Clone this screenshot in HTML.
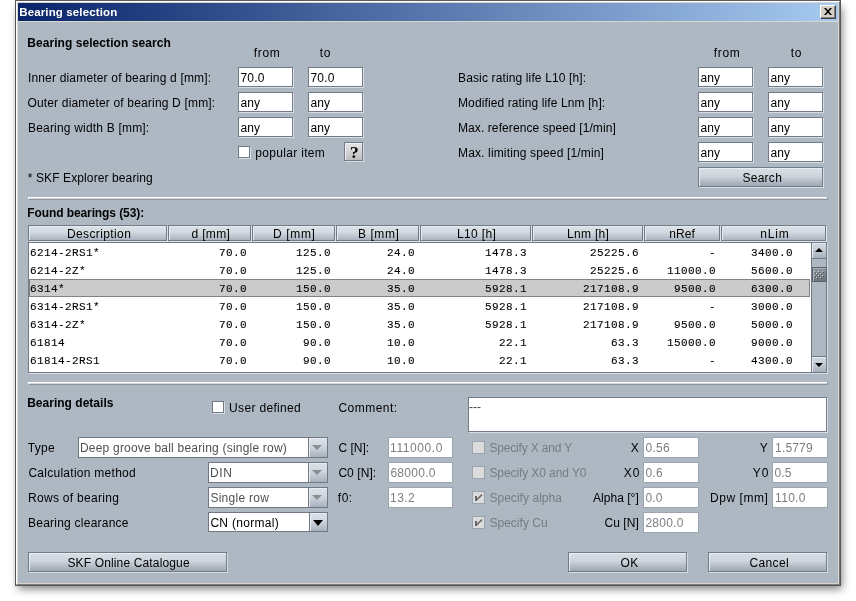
<!DOCTYPE html>
<html><head><meta charset="utf-8"><title>Bearing selection</title>
<style>
*{box-sizing:border-box;margin:0;padding:0}
html,body{width:856px;height:601px;overflow:hidden;background:#fff}
body{font-family:"Liberation Sans",sans-serif;font-size:12px;color:#000;position:relative}
.a{position:absolute;white-space:nowrap}
#root{position:absolute;left:0;top:0;width:856px;height:601px;will-change:transform}
i,b{font-style:normal}
#shadow{left:18px;top:7px;width:824px;height:582px;background:rgba(0,0,0,.5);filter:blur(4.5px);border-radius:2px}
#win{left:15px;top:0;width:826px;height:586px;background:#aeb8c3;border:1px solid;border-color:#5c5c5c #54585c #54585c #50545a}
#win2{left:16px;top:1px;width:824px;height:584px;border:1px solid;border-color:#fff #737477 #7c7c7e #fff}
#win3{left:17px;top:2px;width:822px;height:582px;border:1px solid #dad6ce}
#title{left:18px;top:3px;width:820px;height:18px;background:linear-gradient(90deg,#0a246a 0%,#a6caf0 100%)}
#titlel{left:18px;top:21px;width:820px;height:1px;background:#dad6ce}
#ttext{top:5px;font-weight:bold;font-size:11.5px;color:#fff;line-height:14px;height:14px}
#close{left:820px;top:5px;width:16px;height:14px;background:#d4d0c8;border:1px solid;border-color:#fff #404040 #404040 #fff;box-shadow:inset -1px -1px 0 #808080}
.l{line-height:14px;height:14px}
.b{font-weight:bold}
.in{background:#fff;border:1px solid #717c88;box-shadow:1px 1px 0 #d6dde4;height:20px}
.dis{color:#4e5154;-webkit-text-stroke:0 !important}
.dis2{color:#7b7e82;-webkit-text-stroke:0 !important}
.dis3{color:#767c83;-webkit-text-stroke:0 !important}
.ind{background:#fff;border:1px solid #9aa5b0;height:21px}
.btn{border:1px solid #717c88;box-shadow:1px 1px 0 #d6dde4, inset 1px 1px 0 #e9edf2;background:linear-gradient(#d9dfe6,#cdd4dc 45%,#9da6b2);text-align:center}
.sep i{position:absolute;left:0;top:0;right:1px;height:2px;background:linear-gradient(#fff 50%,#d4d8dd 50%);border-left:1px solid #fff}
.sep b{position:absolute;left:1px;top:0;right:0;height:3px;border-bottom:1px solid #8d949b;border-right:1px solid #8d949b}
.cb{border:1px solid #717b86;background:#fff;box-shadow:1px 1px 0 #d9dfe6}
.cbd{border:1px solid #97a3ae;background:#dcdcdc}
.tbl{background:#fff;border:1px solid #717c88;box-shadow:1px 1px 0 #d6dde4}
.th{border:1px solid #717c88;box-shadow:1px 1px 0 #dfe5eb, inset 1px 1px 0 #e6ebf0;background:linear-gradient(#dde2e9,#d3d9e0 45%,#a9b3bf)}
.sel{background:#cbcbcb;border:1px solid #828282}
.mono{-webkit-text-stroke:0.1px #000;font-family:"Liberation Mono",monospace;font-size:11px;letter-spacing:0.4px;line-height:14px;height:14px}
.sbt{background:#aeb8c3;border-left:1px solid #6f7a86;border-right:1px solid #717c88}
.sbb{border:1px solid #717c88;border-left:none;background:linear-gradient(#d4dae1,#c6cdd6 45%,#a6afbb);box-shadow:inset 1px 1px 0 #e6eaef}
.thumb{border:1px solid #59626c;background:linear-gradient(#8e959d,#6b737b);box-shadow:inset 1px 1px 0 #a7adb4}
.combo{border:1px solid #6f7985;background:#fff}
.cbtn{position:absolute;right:0;top:0;width:19px;height:19px;border-left:1px solid #6f7985;background:linear-gradient(#dde2e9,#cfd6de 45%,#a7b0bc);box-shadow:inset 1px 1px 0 #e9edf2}
.cbtn.en{width:18px;height:18px}
.tri{position:absolute;width:0;height:0;border-left:5px solid transparent;border-right:5px solid transparent;border-top:6px solid #000}
.btn.q{background:linear-gradient(#e4e4e4,#d6d6d6 45%,#bdbdbd);box-shadow:1px 1px 0 #d6dde4, inset 1px 1px 0 #f2f2f2}
.qm{font-family:"Liberation Serif",serif;font-weight:bold;font-size:17.5px;line-height:19px;height:19px}
</style></head>
<body><div id="root">
<div class="a" id="shadow"></div><div class="a" id="win"></div><div class="a" id="win2"></div><div class="a" id="win3"></div>
<div class="a" id="title"></div><div class="a" id="titlel"></div>
<div class="a" id="close"><svg width="14" height="12" viewBox="0 0 14 12" style="position:absolute;left:0;top:0"><path d="M3 2h2l6 7h-2z M9 2h2l-6 7h-2z" fill="#000"/></svg></div>
<div class="a" id="ttext" style="left:19.2px;letter-spacing:0.138px">Bearing selection</div>
<div class="a l b" style="left:27.2px;top:36px;letter-spacing:0.065px;">Bearing selection search</div>
<div class="a l " style="left:253.8px;top:46px;letter-spacing:0.667px;">from</div>
<div class="a l " style="left:319.8px;top:46px;letter-spacing:0.7px;">to</div>
<div class="a l " style="left:713.8px;top:46px;letter-spacing:0.667px;">from</div>
<div class="a l " style="left:790.8px;top:46px;letter-spacing:0.7px;">to</div>
<div class="a l " style="left:27.9px;top:71px;letter-spacing:0.181px;">Inner diameter of bearing d [mm]:</div>
<div class="a in" style="left:238px;top:67px;width:55px;"></div>
<div class="a l " style="left:240.4px;top:71px;letter-spacing:0.233px;">70.0</div>
<div class="a in" style="left:308px;top:67px;width:55px;"></div>
<div class="a l " style="left:310.4px;top:71px;letter-spacing:0.233px;">70.0</div>
<div class="a l " style="left:27.4px;top:96px;letter-spacing:0.178px;">Outer diameter of bearing D [mm]:</div>
<div class="a in" style="left:238px;top:92px;width:55px;"></div>
<div class="a l " style="left:240.5px;top:96px;letter-spacing:0.1px;">any</div>
<div class="a in" style="left:308px;top:92px;width:55px;"></div>
<div class="a l " style="left:310.5px;top:96px;letter-spacing:0.1px;">any</div>
<div class="a l " style="left:28.0px;top:121px;letter-spacing:0.19px;">Bearing width B [mm]:</div>
<div class="a in" style="left:238px;top:117px;width:55px;"></div>
<div class="a l " style="left:240.5px;top:121px;letter-spacing:0.1px;">any</div>
<div class="a in" style="left:308px;top:117px;width:55px;"></div>
<div class="a l " style="left:310.5px;top:121px;letter-spacing:0.1px;">any</div>
<div class="a l " style="left:458.0px;top:71px;letter-spacing:0.136px;">Basic rating life L10 [h]:</div>
<div class="a in" style="left:698px;top:67px;width:55px;"></div>
<div class="a l " style="left:700.5px;top:71px;letter-spacing:0.1px;">any</div>
<div class="a in" style="left:768px;top:67px;width:55px;"></div>
<div class="a l " style="left:770.5px;top:71px;letter-spacing:0.1px;">any</div>
<div class="a l " style="left:458.0px;top:96px;letter-spacing:0.111px;">Modified rating life Lnm [h]:</div>
<div class="a in" style="left:698px;top:92px;width:55px;"></div>
<div class="a l " style="left:700.5px;top:96px;letter-spacing:0.1px;">any</div>
<div class="a in" style="left:768px;top:92px;width:55px;"></div>
<div class="a l " style="left:770.5px;top:96px;letter-spacing:0.1px;">any</div>
<div class="a l " style="left:458.0px;top:121px;letter-spacing:0.089px;">Max. reference speed [1/min]</div>
<div class="a in" style="left:698px;top:117px;width:55px;"></div>
<div class="a l " style="left:700.5px;top:121px;letter-spacing:0.1px;">any</div>
<div class="a in" style="left:768px;top:117px;width:55px;"></div>
<div class="a l " style="left:770.5px;top:121px;letter-spacing:0.1px;">any</div>
<div class="a l " style="left:458.0px;top:146px;letter-spacing:0.146px;">Max. limiting speed [1/min]</div>
<div class="a in" style="left:698px;top:142px;width:55px;"></div>
<div class="a l " style="left:700.5px;top:146px;letter-spacing:0.1px;">any</div>
<div class="a in" style="left:768px;top:142px;width:55px;"></div>
<div class="a l " style="left:770.5px;top:146px;letter-spacing:0.1px;">any</div>
<div class="a cb" style="left:238px;top:146px;width:12px;height:12px;"></div>
<div class="a l " style="left:255.2px;top:146px;letter-spacing:0.327px;">popular item</div>
<div class="a btn q" style="left:344px;top:142px;width:19px;height:19px;"></div>
<div class="a qm" style="left:350px;top:143px">?</div>
<div class="a l " style="left:27.8px;top:171px;letter-spacing:0.105px;">* SKF Explorer bearing</div>
<div class="a btn" style="left:698px;top:167px;width:125px;height:20px;"></div>
<div class="a l " style="left:742.4px;top:171px;letter-spacing:0.28px;">Search</div>
<div class="a sep" style="left:28px;top:197px;width:800px;height:3px;"><i></i><b></b></div>
<div class="a l b" style="left:27.2px;top:206px;letter-spacing:-0.089px;">Found bearings (53):</div>
<div class="a tbl" style="left:28px;top:242px;width:799px;height:131px;"></div>
<div class="a th" style="left:28px;top:225px;width:139px;height:16px;"></div>
<div class="a l " style="left:67.0px;top:227px;letter-spacing:0.38px;">Description</div>
<div class="a th" style="left:168px;top:225px;width:83px;height:16px;"></div>
<div class="a l " style="left:191.5px;top:227px;letter-spacing:0.34px;">d [mm]</div>
<div class="a th" style="left:252px;top:225px;width:83px;height:16px;"></div>
<div class="a l " style="left:273.0px;top:227px;letter-spacing:0.64px;">D [mm]</div>
<div class="a th" style="left:336px;top:225px;width:83px;height:16px;"></div>
<div class="a l " style="left:358.0px;top:227px;letter-spacing:0.56px;">B [mm]</div>
<div class="a th" style="left:420px;top:225px;width:111px;height:16px;"></div>
<div class="a l " style="left:457.0px;top:227px;letter-spacing:0.35px;">L10 [h]</div>
<div class="a th" style="left:532px;top:225px;width:111px;height:16px;"></div>
<div class="a l " style="left:567.0px;top:227px;letter-spacing:0.3px;">Lnm [h]</div>
<div class="a th" style="left:644px;top:225px;width:76px;height:16px;"></div>
<div class="a l " style="left:669.2px;top:227px;letter-spacing:0.133px;">nRef</div>
<div class="a th" style="left:721px;top:225px;width:105px;height:16px;"></div>
<div class="a l " style="left:760.2px;top:227px;letter-spacing:0.867px;">nLim</div>
<div class="a mono" style="left:30px;top:246px">6214-2RS1*</div>
<div class="a mono" style="right:609px;top:246px">70.0</div>
<div class="a mono" style="right:525px;top:246px">125.0</div>
<div class="a mono" style="right:441px;top:246px">24.0</div>
<div class="a mono" style="right:329px;top:246px">1478.3</div>
<div class="a mono" style="right:217px;top:246px">25225.6</div>
<div class="a mono" style="right:140px;top:246px">-</div>
<div class="a mono" style="right:63px;top:246px">3400.0</div>
<div class="a mono" style="left:30px;top:264px">6214-2Z*</div>
<div class="a mono" style="right:609px;top:264px">70.0</div>
<div class="a mono" style="right:525px;top:264px">125.0</div>
<div class="a mono" style="right:441px;top:264px">24.0</div>
<div class="a mono" style="right:329px;top:264px">1478.3</div>
<div class="a mono" style="right:217px;top:264px">25225.6</div>
<div class="a mono" style="right:140px;top:264px">11000.0</div>
<div class="a mono" style="right:63px;top:264px">5600.0</div>
<div class="a sel" style="left:29px;top:279px;width:781px;height:18px;"></div>
<div class="a mono" style="left:30px;top:282px">6314*</div>
<div class="a mono" style="right:609px;top:282px">70.0</div>
<div class="a mono" style="right:525px;top:282px">150.0</div>
<div class="a mono" style="right:441px;top:282px">35.0</div>
<div class="a mono" style="right:329px;top:282px">5928.1</div>
<div class="a mono" style="right:217px;top:282px">217108.9</div>
<div class="a mono" style="right:140px;top:282px">9500.0</div>
<div class="a mono" style="right:63px;top:282px">6300.0</div>
<div class="a mono" style="left:30px;top:300px">6314-2RS1*</div>
<div class="a mono" style="right:609px;top:300px">70.0</div>
<div class="a mono" style="right:525px;top:300px">150.0</div>
<div class="a mono" style="right:441px;top:300px">35.0</div>
<div class="a mono" style="right:329px;top:300px">5928.1</div>
<div class="a mono" style="right:217px;top:300px">217108.9</div>
<div class="a mono" style="right:140px;top:300px">-</div>
<div class="a mono" style="right:63px;top:300px">3000.0</div>
<div class="a mono" style="left:30px;top:318px">6314-2Z*</div>
<div class="a mono" style="right:609px;top:318px">70.0</div>
<div class="a mono" style="right:525px;top:318px">150.0</div>
<div class="a mono" style="right:441px;top:318px">35.0</div>
<div class="a mono" style="right:329px;top:318px">5928.1</div>
<div class="a mono" style="right:217px;top:318px">217108.9</div>
<div class="a mono" style="right:140px;top:318px">9500.0</div>
<div class="a mono" style="right:63px;top:318px">5000.0</div>
<div class="a mono" style="left:30px;top:336px">61814</div>
<div class="a mono" style="right:609px;top:336px">70.0</div>
<div class="a mono" style="right:525px;top:336px">90.0</div>
<div class="a mono" style="right:441px;top:336px">10.0</div>
<div class="a mono" style="right:329px;top:336px">22.1</div>
<div class="a mono" style="right:217px;top:336px">63.3</div>
<div class="a mono" style="right:140px;top:336px">15000.0</div>
<div class="a mono" style="right:63px;top:336px">9000.0</div>
<div class="a mono" style="left:30px;top:354px">61814-2RS1</div>
<div class="a mono" style="right:609px;top:354px">70.0</div>
<div class="a mono" style="right:525px;top:354px">90.0</div>
<div class="a mono" style="right:441px;top:354px">10.0</div>
<div class="a mono" style="right:329px;top:354px">22.1</div>
<div class="a mono" style="right:217px;top:354px">63.3</div>
<div class="a mono" style="right:140px;top:354px">-</div>
<div class="a mono" style="right:63px;top:354px">4300.0</div>
<div class="a sbt" style="left:811px;top:243px;width:16px;height:129px;"></div>
<div class="a sbb" style="left:812px;top:243px;width:15px;height:16px;border-top:none"><div class="tri" style="left:2.5px;top:5px;border-top:none;border-bottom:4.5px solid #000;border-left-width:4.5px;border-right-width:4.5px"></div></div>
<div class="a sbb" style="left:812px;top:356px;width:15px;height:17px;"><div class="tri" style="left:2.5px;top:6px;border-top-width:4.5px;border-left-width:4.5px;border-right-width:4.5px"></div></div>
<div class="a thumb" style="left:812px;top:267px;width:15px;height:15px;"><svg width="13" height="13" viewBox="0 0 13 13" style="position:absolute;left:0;top:0"><rect x="1" y="3" width="1" height="1" fill="#d3d7db"/><rect x="2" y="4" width="1" height="1" fill="#565d65"/><rect x="5" y="3" width="1" height="1" fill="#d3d7db"/><rect x="6" y="4" width="1" height="1" fill="#565d65"/><rect x="9" y="3" width="1" height="1" fill="#d3d7db"/><rect x="10" y="4" width="1" height="1" fill="#565d65"/><rect x="3" y="5" width="1" height="1" fill="#d3d7db"/><rect x="4" y="6" width="1" height="1" fill="#565d65"/><rect x="7" y="5" width="1" height="1" fill="#d3d7db"/><rect x="8" y="6" width="1" height="1" fill="#565d65"/><rect x="1" y="7" width="1" height="1" fill="#d3d7db"/><rect x="2" y="8" width="1" height="1" fill="#565d65"/><rect x="5" y="7" width="1" height="1" fill="#d3d7db"/><rect x="6" y="8" width="1" height="1" fill="#565d65"/><rect x="9" y="7" width="1" height="1" fill="#d3d7db"/><rect x="10" y="8" width="1" height="1" fill="#565d65"/><rect x="3" y="9" width="1" height="1" fill="#d3d7db"/><rect x="4" y="10" width="1" height="1" fill="#565d65"/><rect x="7" y="9" width="1" height="1" fill="#d3d7db"/><rect x="8" y="10" width="1" height="1" fill="#565d65"/></svg></div>
<div class="a sep" style="left:28px;top:382px;width:800px;height:3px;"><i></i><b></b></div>
<div class="a l b" style="left:27.2px;top:396px;letter-spacing:0.014px;">Bearing details</div>
<div class="a cb" style="left:212px;top:401px;width:12px;height:12px;"></div>
<div class="a l " style="left:229.1px;top:401px;letter-spacing:0.327px;">User defined</div>
<div class="a l " style="left:338.4px;top:401px;letter-spacing:0.486px;">Comment:</div>
<div class="a in" style="left:468px;top:397px;width:359px;height:35px;line-height:14px;color:#444;padding:2px 0 0 0">---</div>
<div class="a l " style="left:27.7px;top:441px;letter-spacing:0.3px;">Type</div>
<div class="a combo" style="left:78px;top:437px;width:250px;height:21px;"><div class="cbtn"><div class="tri" style="left:3px;top:7px;border-top:5px solid #8a8d91"></div></div></div>
<div class="a l dis" style="left:80.0px;top:441px;letter-spacing:0.203px;">Deep groove ball bearing (single row)</div>
<div class="a l " style="left:28.4px;top:466px;letter-spacing:0.271px;">Calculation method</div>
<div class="a combo" style="left:208px;top:462px;width:120px;height:21px;"><div class="cbtn"><div class="tri" style="left:3px;top:7px;border-top:5px solid #8a8d91"></div></div></div>
<div class="a l dis" style="left:210.0px;top:466px;letter-spacing:0.65px;">DIN</div>
<div class="a l " style="left:28.0px;top:491px;letter-spacing:0.293px;">Rows of bearing</div>
<div class="a combo" style="left:208px;top:487px;width:120px;height:21px;"><div class="cbtn"><div class="tri" style="left:3px;top:7px;border-top:5px solid #8a8d91"></div></div></div>
<div class="a l dis" style="left:210.4px;top:491px;letter-spacing:0.278px;">Single row</div>
<div class="a l " style="left:28.0px;top:516px;letter-spacing:0.237px;">Bearing clearance</div>
<div class="a combo" style="left:208px;top:512px;width:120px;height:20px;"><div class="cbtn en"><div class="tri" style="left:3px;top:7px"></div></div></div>
<div class="a l " style="left:210.4px;top:516px;letter-spacing:0.3px;">CN (normal)</div>
<div class="a l " style="left:338.4px;top:441px;letter-spacing:0.02px;">C [N]:</div>
<div class="a ind" style="left:388px;top:437px;width:65px;"></div>
<div class="a l dis2" style="left:390.1px;top:441px;letter-spacing:0.586px;">111000.0</div>
<div class="a l " style="left:338.4px;top:466px;letter-spacing:0.067px;">C0 [N]:</div>
<div class="a ind" style="left:388px;top:462px;width:65px;"></div>
<div class="a l dis2" style="left:390.4px;top:466px;letter-spacing:0.283px;">68000.0</div>
<div class="a l " style="left:337.8px;top:491px;letter-spacing:0.5px;">f0:</div>
<div class="a ind" style="left:388px;top:487px;width:65px;"></div>
<div class="a l dis2" style="left:390.1px;top:491px;letter-spacing:0.367px;">13.2</div>
<div class="a cbd" style="left:472px;top:441px;width:13px;height:13px;"></div>
<div class="a l dis3" style="left:489.4px;top:441px;letter-spacing:-0.164px;">Specify X and Y</div>
<div class="a cbd" style="left:472px;top:466px;width:13px;height:13px;"></div>
<div class="a l dis3" style="left:489.4px;top:466px;letter-spacing:-0.088px;">Specify X0 and Y0</div>
<div class="a cbd" style="left:472px;top:491px;width:13px;height:13px;"><svg width="11" height="11" viewBox="0 0 11 11" style="position:absolute;left:0;top:0"><path d="M2 4h2v5h-2z" fill="#666"/><path d="M3.6 8 L9 2.6" stroke="#666" stroke-width="1.5" fill="none"/></svg></div>
<div class="a l dis3" style="left:489.4px;top:491px;letter-spacing:0.042px;">Specify alpha</div>
<div class="a cbd" style="left:472px;top:516px;width:13px;height:13px;"><svg width="11" height="11" viewBox="0 0 11 11" style="position:absolute;left:0;top:0"><path d="M2 4h2v5h-2z" fill="#666"/><path d="M3.6 8 L9 2.6" stroke="#666" stroke-width="1.5" fill="none"/></svg></div>
<div class="a l dis3" style="left:489.4px;top:516px;letter-spacing:0.033px;">Specify Cu</div>
<div class="a l " style="left:630.7px;top:441px;letter-spacing:0px;">X</div>
<div class="a ind" style="left:643px;top:437px;width:56px;"></div>
<div class="a l dis2" style="left:645.5px;top:441px;letter-spacing:0.233px;">0.56</div>
<div class="a l " style="left:623.7px;top:466px;letter-spacing:1.1px;">X0</div>
<div class="a ind" style="left:643px;top:462px;width:56px;"></div>
<div class="a l dis2" style="left:645.5px;top:466px;letter-spacing:0.2px;">0.6</div>
<div class="a l " style="left:593.0px;top:491px;letter-spacing:0.037px;">Alpha [°]</div>
<div class="a ind" style="left:643px;top:487px;width:56px;"></div>
<div class="a l dis2" style="left:645.5px;top:491px;letter-spacing:0.15px;">0.0</div>
<div class="a l " style="left:604.4px;top:516px;letter-spacing:0.08px;">Cu [N]</div>
<div class="a ind" style="left:643px;top:512px;width:56px;"></div>
<div class="a l dis2" style="left:645.4px;top:516px;letter-spacing:0.28px;">2800.0</div>
<div class="a l " style="left:759.7px;top:441px;letter-spacing:0px;">Y</div>
<div class="a ind" style="left:772px;top:437px;width:56px;"></div>
<div class="a l dis2" style="left:775.1px;top:441px;letter-spacing:0.16px;">1.5779</div>
<div class="a l " style="left:752.7px;top:466px;letter-spacing:1.1px;">Y0</div>
<div class="a ind" style="left:772px;top:462px;width:56px;"></div>
<div class="a l dis2" style="left:774.5px;top:466px;letter-spacing:0.15px;">0.5</div>
<div class="a l " style="left:710.0px;top:491px;letter-spacing:0.543px;">Dpw [mm]</div>
<div class="a ind" style="left:772px;top:487px;width:56px;"></div>
<div class="a l dis2" style="left:775.1px;top:491px;letter-spacing:0.3px;">110.0</div>
<div class="a btn" style="left:28px;top:552px;width:199px;height:20px;"></div>
<div class="a l " style="left:67.4px;top:556px;letter-spacing:0.147px;">SKF Online Catalogue</div>
<div class="a btn" style="left:568px;top:552px;width:119px;height:20px;"></div>
<div class="a l " style="left:620.4px;top:556px;letter-spacing:0.5px;">OK</div>
<div class="a btn" style="left:708px;top:552px;width:119px;height:20px;"></div>
<div class="a l " style="left:749.4px;top:556px;letter-spacing:0.4px;">Cancel</div>
</div></body></html>
